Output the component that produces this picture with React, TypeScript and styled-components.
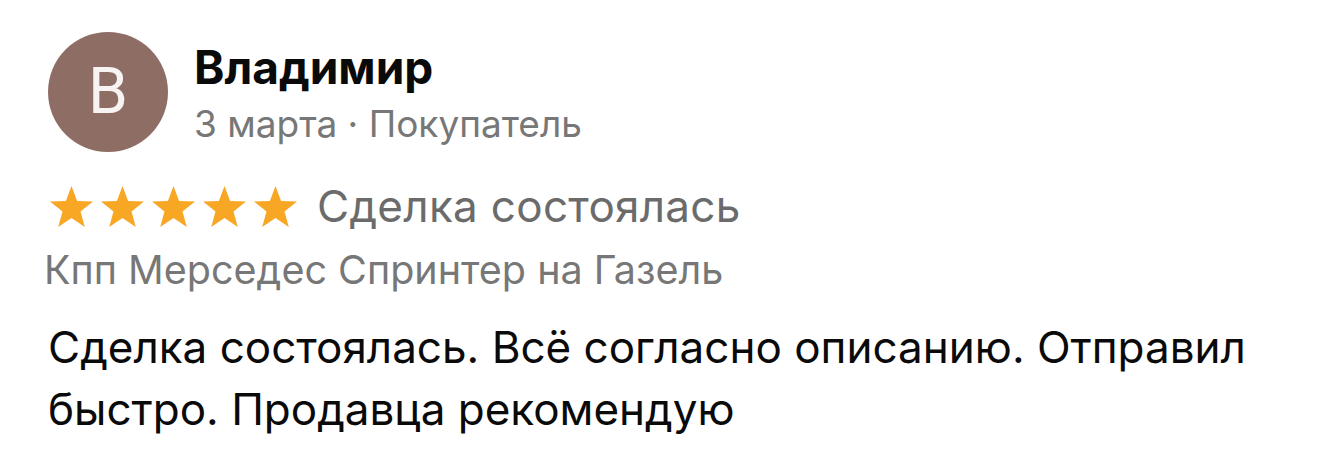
import { ReactElement } from 'react';
import styled, { createGlobalStyle } from 'styled-components';

//
// Styles
//

const GlobalStyle = createGlobalStyle`
  body {
    margin: 0;
    background: #ffffff;
    font-family: Inter, Roboto, "Noto Sans", Arial, sans-serif;
  }
`;

const CardDiv = styled.div`
  width: 1320px;
  height: 468px;
  box-sizing: border-box;
  padding: 32px 48px 0 48px;
  display: flex;
  flex-direction: column;
  background: #ffffff;
`;

const HeaderRow = styled.div`
  display: flex;
  align-items: flex-start;
  gap: 26px;
`;

const Avatar = styled.div<{ $bg: string }>`
  width: 120px;
  height: 120px;
  border-radius: 50%;
  flex-shrink: 0;
  background: ${({ $bg }) => $bg};
  color: #f7f3f2;
  font-family: Roboto, sans-serif;
  font-size: 64px;
  font-weight: 400;
  display: flex;
  align-items: center;
  justify-content: center;
  line-height: 1;
`;

const NameCol = styled.div`
  display: flex;
  flex-direction: column;
  margin-top: 10px;
`;

const Name = styled.div`
  font-size: 46px;
  font-weight: 700;
  color: #0a0a0a;
  line-height: 50px;
`;

const Meta = styled.div`
  margin-top: 10px;
  font-size: 37px;
  color: #777777;
  line-height: 44px;
`;

const RatingRow = styled.div`
  display: flex;
  align-items: center;
  margin-top: 30px;
  height: 48px;
`;

const Stars = styled.div`
  display: flex;
  gap: 8px;
  margin-left: 2px;
`;

const StatusText = styled.span`
  margin-left: 20px;
  font-size: 44px;
  letter-spacing: 0.3px;
  color: #6b6b6b;
  line-height: 48px;
`;

const Product = styled.div`
  margin-top: 18px;
  margin-left: -4px;
  font-size: 39.5px;
  color: #777777;
  line-height: 44px;
`;

const Body = styled.p`
  margin: 24px 0 0 0;
  font-size: 44px;
  color: #0a0a0a;
  line-height: 62px;
`;

//
// Component
//

const Star = (): ReactElement => (
  <svg width="43" height="41" viewBox="0 0 43 41">
    <path
      d="M21.5 0L27.08 14.91L42.99 15.62L30.53 25.54L34.78 40.88L21.5 32.1L8.22 40.88L12.47 25.54L0.01 15.62L15.92 14.91Z"
      fill="#F8A725"
    />
  </svg>
);

const App = (): ReactElement => (
  <>
    <GlobalStyle />
    <CardDiv>
      <HeaderRow>
        <Avatar $bg="#8e6e64">В</Avatar>
        <NameCol>
          <Name>Владимир</Name>
          <Meta>3 марта · Покупатель</Meta>
        </NameCol>
      </HeaderRow>
      <RatingRow>
        <Stars>
          {[0, 1, 2, 3, 4].map((i) => <Star key={i} />)}
        </Stars>
        <StatusText>Сделка состоялась</StatusText>
      </RatingRow>
      <Product>Кпп Мерседес Спринтер на Газель</Product>
      <Body>
        Сделка состоялась. Всё согласно описанию. Отправил
        <br />
        быстро. Продавца рекомендую
      </Body>
    </CardDiv>
  </>
);

export default App;
